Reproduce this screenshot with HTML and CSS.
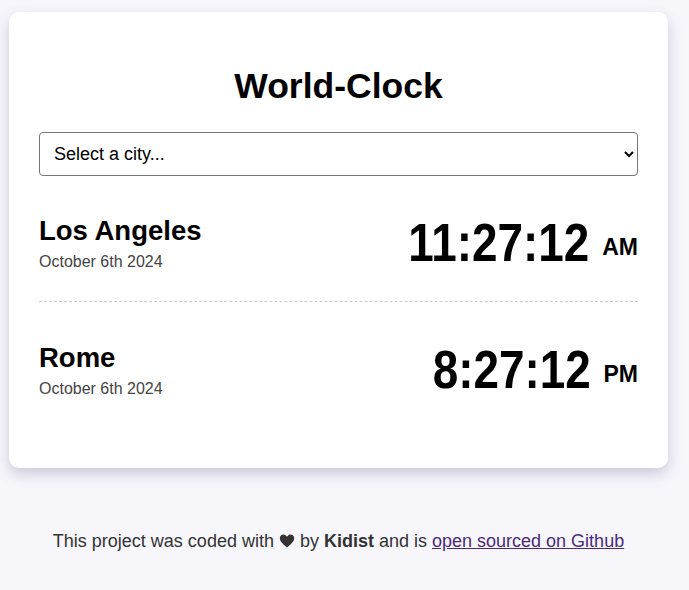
FILE: index.html
```html
<!DOCTYPE html>
<html lang="en">
<head>
<meta charset="utf-8">
<title>World-Clock</title>
<link rel="stylesheet" href="styles.css">
</head>
<body>
<div class="container">
  <div class="card">
    <h1 class="title">World-Clock</h1>
    <select class="city-select">
      <option>Select a city...</option>
    </select>
    <div class="cities">
      <div class="city">
        <div class="city-info">
          <h2 class="city-name">Los Angeles</h2>
          <div class="city-date">October 6th 2024</div>
        </div>
        <div class="city-time"><span class="digits">11:27:12</span><small class="ampm">AM</small></div>
      </div>
      <div class="city">
        <div class="city-info">
          <h2 class="city-name">Rome</h2>
          <div class="city-date">October 6th 2024</div>
        </div>
        <div class="city-time"><span class="digits">8:27:12</span><small class="ampm">PM</small></div>
      </div>
    </div>
  </div>
  <footer class="footer">
    This project was coded with <svg class="heart" viewBox="0 0 16 14" width="16" height="14" aria-hidden="true"><path d="M8 13.5 C6.5 12.2 0.8 8.2 0.8 4.3 C0.8 2 2.5 0.5 4.4 0.5 C6 0.5 7.3 1.5 8 2.8 C8.7 1.5 10 0.5 11.6 0.5 C13.5 0.5 15.2 2 15.2 4.3 C15.2 8.2 9.5 12.2 8 13.5 Z" fill="#333"/></svg> by <strong>Kidist</strong> and is <a href="#" class="footer-link">open sourced on Github</a>
  </footer>
</div>
</body>
</html>
```

FILE: styles.css
```css
* {
  box-sizing: border-box;
}

body {
  margin: 0;
  background: #f7f6fb;
  font-family: "Liberation Sans", Arial, sans-serif;
  color: #000;
}

.container {
  width: 659px;
  margin: 12px 0 0 9px;
}

.card {
  background: #fff;
  border-radius: 10px;
  box-shadow: 0 6px 14px rgba(80, 70, 120, 0.25);
  padding: 30px 30px 32px;
}

.title {
  font-size: 35.5px;
  font-weight: 700;
  text-align: center;
  margin: 24px 0 25px;
  line-height: 41px;
}

.city-select {
  display: block;
  width: 100%;
  height: 44px;
  font-family: "Liberation Sans", Arial, sans-serif;
  font-size: 18px;
  padding: 0 10px;
  border: 1px solid #767676;
  border-radius: 4px;
  background: #fff;
  color: #000;
}

.city {
  display: flex;
  justify-content: space-between;
  align-items: flex-start;
  padding: 39px 0 26px;
  border-bottom: 1px dashed #ccc;
}

.city:last-child {
  border-bottom: none;
  padding-top: 40px;
  padding-bottom: 34px;
}

.city-name {
  font-size: 27.5px;
  font-weight: 700;
  margin: 0;
  line-height: 32px;
}

.city-date {
  font-size: 16px;
  color: #444;
  margin-top: 6px;
  line-height: 18px;
}

.city-time {
  font-size: 53px;
  font-weight: 700;
  line-height: 56px;
  white-space: nowrap;
}

.digits {
  display: inline-block;
  transform: scaleX(0.865);
  transform-origin: right center;
}

.ampm {
  font-size: 23px;
  vertical-align: middle;
  margin-left: 13px;
}

.footer {
  text-align: center;
  font-size: 18px;
  color: #333;
  margin-top: 63px;
}

.heart {
  vertical-align: -1px;
}

.footer-link {
  color: #4b2a7a;
}
```
